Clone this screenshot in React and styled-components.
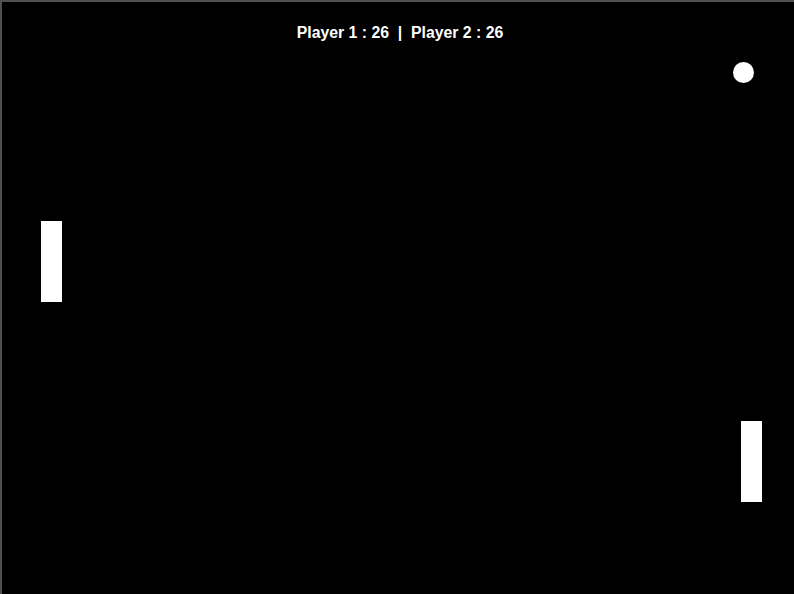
import styled, { createGlobalStyle } from "styled-components";

const GlobalStyle = createGlobalStyle`
  html, body {
    margin: 0;
    padding: 0;
    background: #000;
    overflow: hidden;
  }
`;

export default function App() {
  return (
    <>
      <GlobalStyle />
      <Court>
        <Score>Player 1 : 26  |  Player 2 : 26</Score>
        <Paddle $x={39} $y={219} />
        <Paddle $x={739} $y={419} />
        <Ball $x={731} $y={60} />
      </Court>
    </>
  );
}

const Court = styled.div`
  position: relative;
  width: 800px;
  height: 600px;
  background: #000;
  border-top: 2px solid #505050;
  border-left: 2px solid #505050;
`;

const Score = styled.div`
  padding-top: 21px;
  width: 796px;
  text-align: center;
  white-space: pre;
  color: #fff;
  font-family: "Liberation Sans", Arial, sans-serif;
  font-weight: bold;
  font-size: 15.8px;
  line-height: 20px;
`;

const Paddle = styled.div`
  position: absolute;
  left: ${(p) => p.$x}px;
  top: ${(p) => p.$y}px;
  width: 21px;
  height: 81px;
  background: #fff;
`;

const Ball = styled.div`
  position: absolute;
  left: ${(p) => p.$x}px;
  top: ${(p) => p.$y}px;
  width: 21px;
  height: 21px;
  border-radius: 50%;
  background: #fff;
`;
